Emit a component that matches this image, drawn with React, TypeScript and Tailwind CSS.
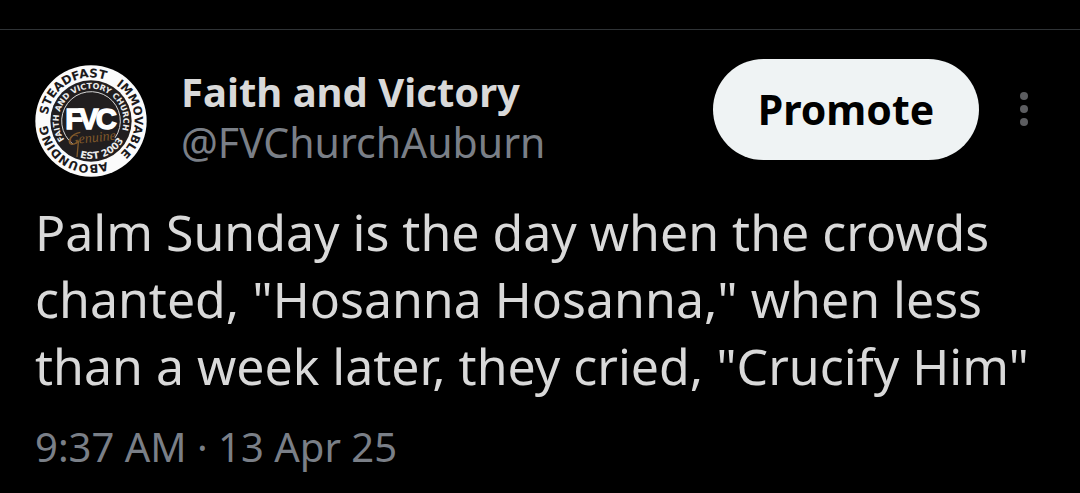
const CENTER = 198;

function point(radius: number, degrees: number) {
  const a = (degrees * Math.PI) / 180;
  return `${(CENTER + radius * Math.cos(a)).toFixed(2)} ${(CENTER + radius * Math.sin(a)).toFixed(2)}`;
}

function arc(radius: number, from: number, to: number) {
  const large = Math.abs(to - from) > 180 ? 1 : 0;
  const sweep = to > from ? 1 : 0;
  return `M${point(radius, from)} A${radius} ${radius} 0 ${large} ${sweep} ${point(radius, to)}`;
}

const curvedWords = [
  { id: "seal-steadfast", text: "STEADFAST", d: arc(131, 188, 305), size: 36, fill: "#1c1a1b" },
  { id: "seal-immovable", text: "IMMOVABLE", d: arc(131, 305, 425), size: 35, fill: "#1c1a1b" },
  { id: "seal-abounding", text: "ABOUNDING", d: arc(131, 69, 187), size: 35, fill: "#1c1a1b" },
  { id: "seal-church", text: "FAITH AND VICTORY CHURCH", d: arc(97, 145, 395), size: 24, fill: "#ececec" },
  { id: "seal-est", text: "EST 2003", d: arc(114, 107, 15), size: 29, fill: "#ececec" },
];

function Avatar() {
  return (
    <svg viewBox="30 30 336 336" className="size-28 shrink-0" role="img" aria-label="Faith and Victory Church">
      <circle cx="198" cy="198" r="167" fill="#fbfbfb" />
      <circle cx="198" cy="198" r="122" fill="#211e1f" />
      <path d={arc(88, 128, 395)} fill="none" stroke="#d5d5d5" strokeWidth="3" />
      {curvedWords.map((w) => (
        <g key={w.id}>
          <path id={w.id} d={w.d} fill="none" />
          <text className="font-['DejaVu_Sans',sans-serif] font-bold" fontSize={w.size} fill={w.fill}>
            <textPath href={`#${w.id}`}>{w.text}</textPath>
          </text>
        </g>
      ))}
      <text
        x="121 162 212"
        y="223"
        fontSize="88"
        fill="#ffffff"
        stroke="#ffffff"
        strokeWidth="4"
        className="font-['Liberation_Sans',sans-serif] font-bold"
      >
        FVC
      </text>
      <text
        x="132"
        y="269"
        fontSize="42"
        fill="#80592a"
        transform="rotate(-6 132 269)"
        className="font-['Liberation_Serif',serif] italic"
      >
        Genuine
      </text>
      <path d="M166 232 C140 236 122 262 140 268 C154 270 164 250 160 262 L156 306" fill="none" stroke="#80592a" strokeWidth="4" />
    </svg>
  );
}

export default function App() {
  return (
    <main className="min-h-screen bg-black pt-[29px] font-['Noto_Sans',sans-serif] text-[#d9d9d9]">
      <article className="border-t border-[#2f3336] pl-[35px] pr-[43px] pt-[29px]">
        <header className="flex items-start">
          <div className="mt-1.5">
            <Avatar />
          </div>
          <div className="ml-[34px] mt-2 min-w-0 flex-1 leading-[50px]">
            <h1 className="text-[40px] font-bold leading-[50px]">Faith and Victory</h1>
            <a href="#profile" className="block text-[41px] leading-[50px] text-[#7a7f87]">@FVChurchAuburn</a>
          </div>
          <button type="button" className="h-[101px] w-[266px] shrink-0 rounded-full bg-[#eff3f4] text-[41px] font-bold text-black">
            Promote
          </button>
          <button type="button" aria-label="More options" className="ml-8 flex h-[101px] w-[26px] shrink-0 items-center justify-center">
            <svg viewBox="0 0 10 36" className="h-9 w-2.5" fill="#5c5d60">
              <circle cx="5" cy="4" r="4" />
              <circle cx="5" cy="17" r="4" />
              <circle cx="5" cy="30" r="4" />
            </svg>
          </button>
        </header>
        <p className="mt-[22px] text-[50px] leading-[67px]">
          Palm Sunday is the day when the crowds
          <br />
          chanted, "Hosanna Hosanna," when less
          <br />
          than a week later, they cried, "Crucify Him"
        </p>
        <time dateTime="2025-04-13T09:37" className="mt-[22px] block text-[40px] leading-[50px] text-[#7a7f87]">
          9:37 AM · 13 Apr 25
        </time>
      </article>
    </main>
  );
}
